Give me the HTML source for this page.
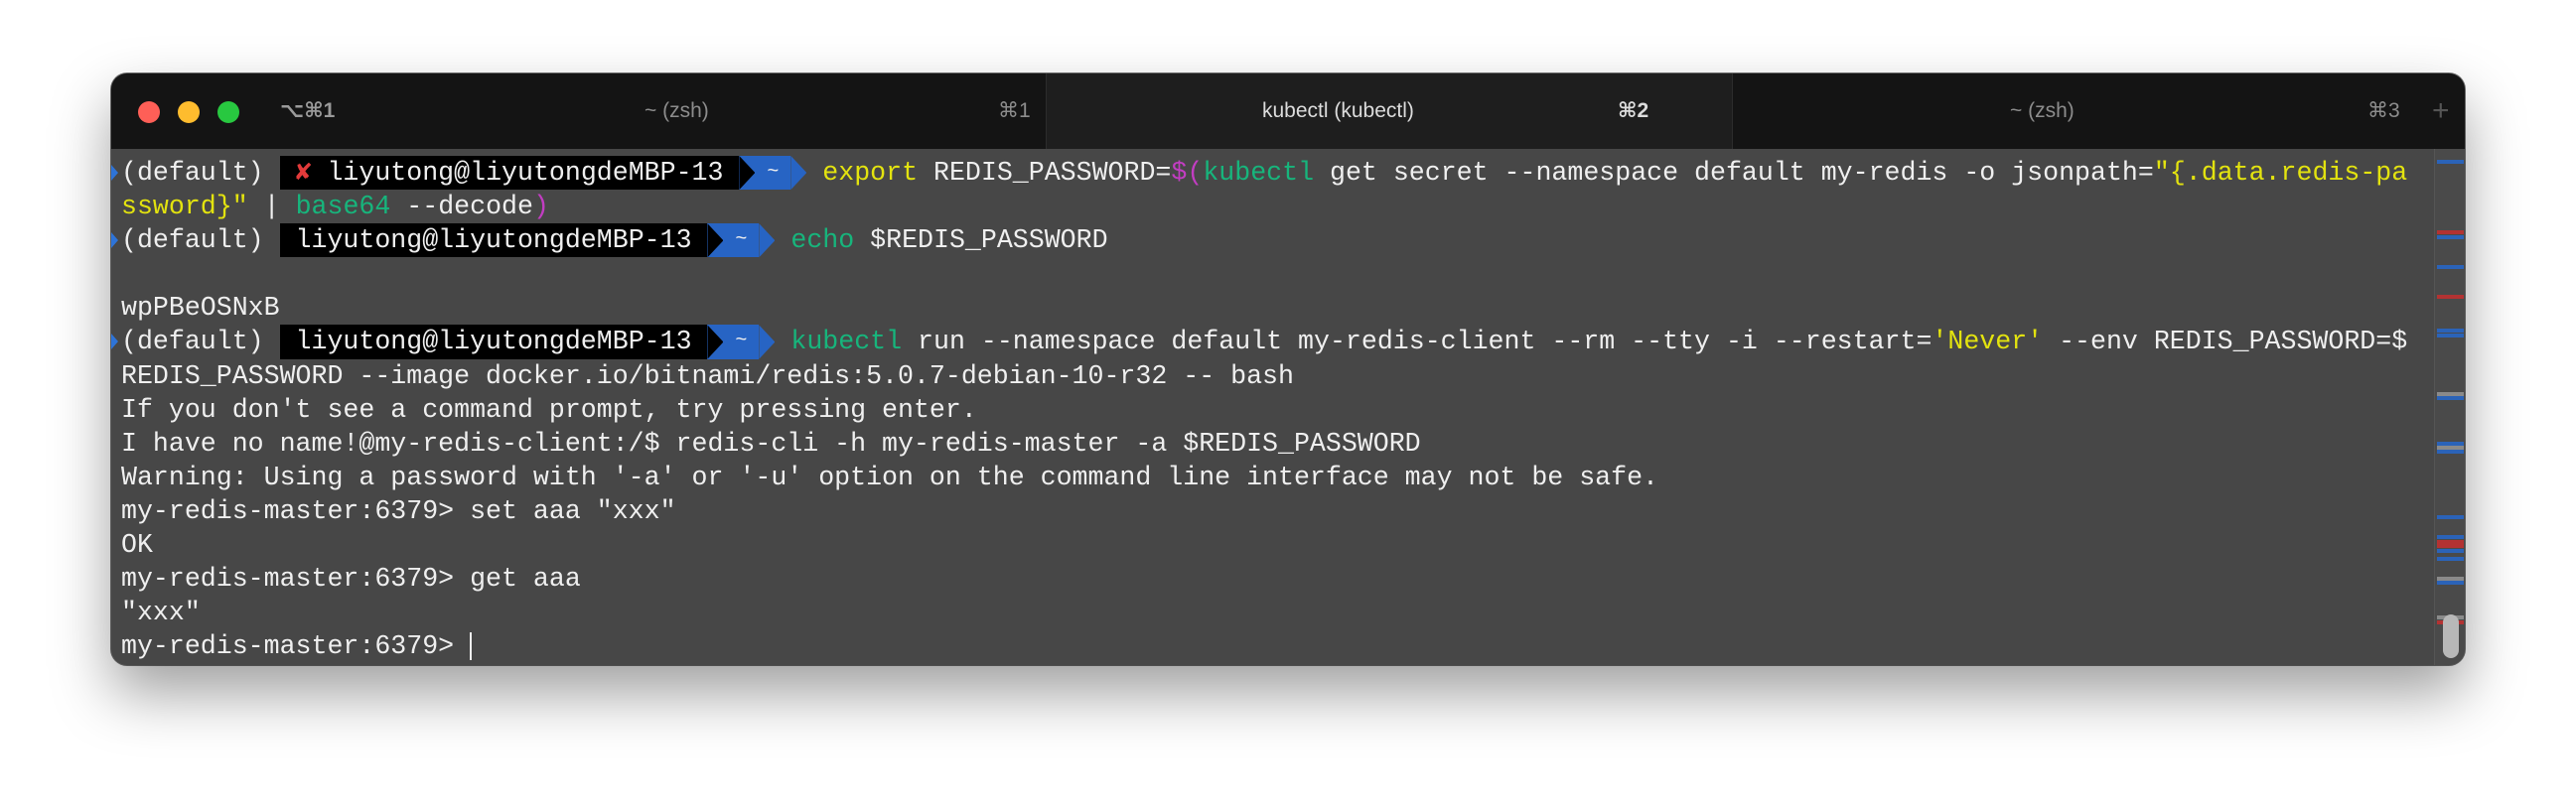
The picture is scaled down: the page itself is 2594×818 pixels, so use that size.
<!DOCTYPE html>
<html><head><meta charset="utf-8"><style>
*{margin:0;padding:0;box-sizing:border-box}
html,body{width:2594px;height:818px;background:#fff;overflow:hidden}
.win{position:absolute;left:112px;top:74px;width:2370px;height:596px;border-radius:16px;background:#474747;overflow:hidden;box-shadow:0 28px 60px rgba(0,0,0,.38),0 0 0 1px rgba(0,0,0,.55)}
.bar{position:absolute;left:0;top:0;width:100%;height:76px;background:#141414}
.dot{position:absolute;top:28px;width:22px;height:22px;border-radius:50%}
.tab{position:absolute;top:0;height:76px;font-family:"Liberation Sans","DejaVu Sans",sans-serif;font-size:21px;color:#8c8c8c;line-height:76px;white-space:nowrap}
.act{background:#1e1e1e;border-left:1px solid #2c2c2c;border-right:1px solid #2c2c2c;color:#dcdcdc}
.t{position:absolute;left:10px;top:83px;font-family:"Liberation Mono","DejaVu Sans Mono",monospace;font-size:26.6px;color:#efefef}
.r{height:34.1px;line-height:34.1px;white-space:pre}
.bk{display:inline-block;background:#000;height:34.1px;vertical-align:top}
.bl{display:inline-block;background:#2764c4;height:34.1px;vertical-align:top;font-size:20px;width:3ch;text-align:center}
.a1,.a2{display:inline-block;width:1ch;height:34.1px;vertical-align:top;position:relative}
.a1{background:#2764c4}
.a1::after,.a2::after{content:"";position:absolute;inset:0;clip-path:polygon(0 0,100% 50%,0 100%)}
.a1::after{background:#000}
.a2::after{background:#2764c4}
.y{color:#e3e30f}.g{color:#17b57c}.m{color:#c23dc2}.x{color:#e23a3a;display:inline-block;width:1ch;overflow:hidden;vertical-align:top}
.mk{position:absolute;left:0;width:8px;height:34px}
.mk::after{content:"";position:absolute;left:0;top:9px;width:7px;height:16px;background:#2e74d8;clip-path:polygon(0 0,100% 50%,0 100%)}
.sb{position:absolute;left:2339px;top:76px;width:31px;height:520px;background:#4a4a4a;border-left:1px solid #555}
.sm{position:absolute;left:2px;width:27px;height:4px}
.B{background:#2b63b8}.R{background:#b33232}.G{background:#8a8a8a}
</style></head><body>
<div class="win">
 <div class="bar">
  <div class="dot" style="left:27px;background:#fe5f57"></div>
  <div class="dot" style="left:67px;background:#febc2e"></div>
  <div class="dot" style="left:107px;background:#28c840"></div>
  <div class="tab" style="left:170px;color:#9a9a9a;font-weight:bold">⌥⌘1</div>
  <div class="tab" style="left:537px">~ (zsh)</div>
  <div class="tab" style="left:893px">⌘1</div>
  <div class="tab act" style="left:941px;width:692px"><span style="position:absolute;left:217px">kubectl (kubectl)</span><span style="position:absolute;left:575px;font-weight:bold">⌘2</span></div>
  <div class="tab" style="left:1912px">~ (zsh)</div>
  <div class="tab" style="left:2272px">⌘3</div>
  <div class="tab" style="left:2337px;font-size:30px;color:#555">+</div>
 </div>
 <div class="mk" style="top:83px"></div>
 <div class="mk" style="top:151px"></div>
 <div class="mk" style="top:253px"></div>
 <div class="t">
<div class="r">(default) <span class="bk"> <span class="x">✘</span> liyutong@liyutongdeMBP-13 </span><span class="a1"></span><span class="bl">~</span><span class="a2"></span> <span class="y">export</span> REDIS_PASSWORD=<span class="m">$(</span><span class="g">kubectl</span> get secret --namespace default my-redis -o jsonpath=<span class="y">"{.data.redis-pa</span></div>
<div class="r"><span class="y">ssword}"</span> | <span class="g">base64</span> --decode<span class="m">)</span></div>
<div class="r">(default) <span class="bk"> liyutong@liyutongdeMBP-13 </span><span class="a1"></span><span class="bl">~</span><span class="a2"></span> <span class="g">echo</span> $REDIS_PASSWORD</div>
<div class="r"> </div>
<div class="r">wpPBeOSNxB</div>
<div class="r">(default) <span class="bk"> liyutong@liyutongdeMBP-13 </span><span class="a1"></span><span class="bl">~</span><span class="a2"></span> <span class="g">kubectl</span> run --namespace default my-redis-client --rm --tty -i --restart=<span class="y">'Never'</span> --env REDIS_PASSWORD=$</div>
<div class="r">REDIS_PASSWORD --image docker.io/bitnami/redis:5.0.7-debian-10-r32 -- bash</div>
<div class="r">If you don't see a command prompt, try pressing enter.</div>
<div class="r">I have no name!@my-redis-client:/$ redis-cli -h my-redis-master -a $REDIS_PASSWORD</div>
<div class="r">Warning: Using a password with '-a' or '-u' option on the command line interface may not be safe.</div>
<div class="r">my-redis-master:6379&gt; set aaa "xxx"</div>
<div class="r">OK</div>
<div class="r">my-redis-master:6379&gt; get aaa</div>
<div class="r">"xxx"</div>
<div class="r">my-redis-master:6379&gt; <span style="display:inline-block;width:2px;height:28px;background:#eee;vertical-align:middle"></span></div>
 </div>
 <div class="sb">
  <div class="sm B" style="top:11px"></div>
  <div class="sm R" style="top:82px"></div><div class="sm B" style="top:87px"></div>
  <div class="sm B" style="top:117px"></div>
  <div class="sm R" style="top:147px"></div>
  <div class="sm B" style="top:181px"></div><div class="sm B" style="top:186px"></div>
  <div class="sm G" style="top:245px"></div><div class="sm B" style="top:249px"></div>
  <div class="sm B" style="top:295px"></div><div class="sm G" style="top:299px"></div><div class="sm B" style="top:303px"></div>
  <div class="sm B" style="top:369px"></div>
  <div class="sm B" style="top:389px"></div><div class="sm R" style="top:394px"></div><div class="sm R" style="top:398px"></div><div class="sm B" style="top:403px"></div>
  <div class="sm B" style="top:411px"></div>
  <div class="sm G" style="top:431px"></div><div class="sm B" style="top:435px"></div>
  <div class="sm G" style="top:470px"></div><div class="sm R" style="top:475px"></div>
  <div style="position:absolute;left:8px;top:469px;width:16px;height:44px;border-radius:8px;background:#b8b8b8"></div>
 </div>
</div>
</body></html>
